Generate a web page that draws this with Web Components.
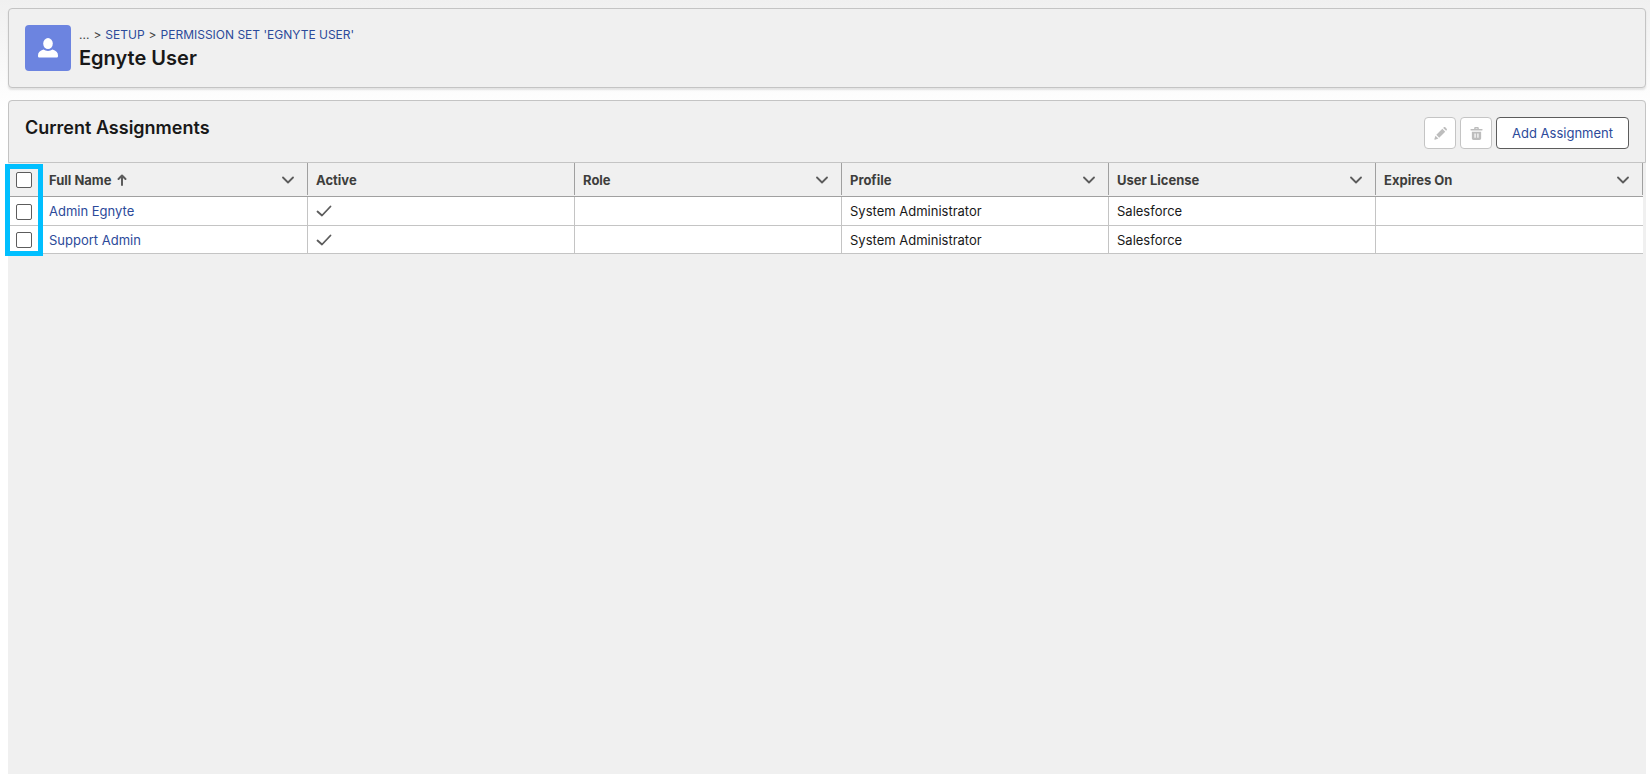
<!DOCTYPE html>
<html lang="en">
<head>
  <meta charset="UTF-8">
  <meta name="viewport" content="width=device-width, initial-scale=1.0">
  <title>Egnyte User</title>
  <style>
    html {
      height: 100%;
      background: #ffffff;
    }

    body {
      min-height: 100%;
      box-sizing: border-box;
      margin: 0;
      padding: 8px 4px 0 8px;
      display: flex;
      flex-direction: column;
      gap: 12px;
      background: linear-gradient(#f0f0f0, #ffffff 110px);
      font-family: Inter, "Liberation Sans", sans-serif;
      font-size: 13px;
      line-height: 20px;
      color: #181818;
    }
  </style>
</head>
<body>
  <page-header heading="Egnyte User">
    <span>...</span>
    <span>&gt;</span>
    <a href="#setup">SETUP</a>
    <span>&gt;</span>
    <a href="#permission-set">PERMISSION SET 'EGNYTE USER'</a>
  </page-header>

  <list-panel heading="Current Assignments">
    <tool-button slot="actions" icon="edit" label="Edit" disabled></tool-button>
    <tool-button slot="actions" icon="delete" label="Delete" disabled></tool-button>
    <tool-button slot="actions">Add Assignment</tool-button>
    <assignment-table></assignment-table>
  </list-panel>

  <script>
    const ICONS = {
      user: { box: "0 0 20 20", path: '<ellipse cx="10" cy="5.6" rx="4.8" ry="5.5"/><path d="M5.500 11.600c1.200.8 2.800 1.300 4.500 1.300s3.300-.5 4.500-1.300C18 12.500 20 14.500 20 17.500v.5c0 1-.6 1.500-1.500 1.500h-17C.6 19.500 0 19 0 18v-.5c0-3 2-5 5.500-5.900z"/>' },
      edit: { box: "0 0 14 14", path: '<path d="M1.600 9.300l3.100 3.100-3.600 1.200c-.5.1-.8-.2-.7-.7zM2.500 8.400l6.500-6.500 3.100 3.100-6.500 6.500zM9.900 1l.6-.6c.5-.5 1.200-.5 1.700 0l1.400 1.400c.5.5.5 1.200 0 1.700L13 4.100z"/>' },
      delete: { box: "0 0 14 14", path: '<path fill-rule="evenodd" d="M13 2.200H9.500V1.400C9.500.6 8.900 0 8.100 0H5.900c-.8 0-1.400.6-1.400 1.400v.8H1c-.3 0-.5.2-.5.5v.6c0 .3.2.5.5.5h12c.3 0 .5-.2.5-.5v-.6c0-.3-.2-.5-.5-.5zM6 2.200v-.6h2v.6zM2 5.200h10v7c0 1-.8 1.800-1.800 1.800H3.800C2.800 14 2 13.200 2 12.200zM4.800 7v4.600h1.300V7zM7.900 7v4.600h1.300V7z"/>' },
      down: { box: "0 0 12 12", path: '<path d="M1 3.500l5 5 5-5" fill="none" stroke="currentColor" stroke-width="1.8" stroke-linecap="round" stroke-linejoin="round"/>' },
      up: { box: "0 0 10 12", path: '<path d="M5 11V1.500M1.500 5L5 1.500 8.500 5" fill="none" stroke="currentColor" stroke-width="2" stroke-linecap="round" stroke-linejoin="round"/>' },
      check: { box: "0 0 16 12", path: '<path d="M1.500 6.500l4.500 4L14.500 1.500" fill="none" stroke="currentColor" stroke-width="1.8" stroke-linecap="round" stroke-linejoin="round"/>' },
    };

    function icon(name, width, height = width) {
      return `<svg viewBox="${ICONS[name].box}" width="${width}" height="${height}" fill="currentColor" aria-hidden="true">${ICONS[name].path}</svg>`;
    }

    class PageHeader extends HTMLElement {
      constructor() {
        super();
        this.attachShadow({ mode: "open" });
      }

      connectedCallback() {
        this.shadowRoot.innerHTML = `
          <style>
            :host {
              display: block;
            }

            header {
              display: flex;
              align-items: flex-start;
              gap: 8px;
              padding: 16px;
              border: 1px solid #c4c4c4;
              border-radius: 4px;
              background: #f0f0f0;
              box-shadow: 0 2px 2px 0 rgba(0, 0, 0, 0.1);
            }

            .badge {
              flex: none;
              display: flex;
              align-items: center;
              justify-content: center;
              width: 46px;
              height: 46px;
              border-radius: 4px;
              background: #6c84e0;
              color: #ffffff;
            }

            nav {
              display: flex;
              gap: 4px;
              font-size: 12px;
              line-height: 20px;
              color: #444444;
            }

            h1 {
              margin: 0;
              font-size: 20px;
              line-height: 26px;
              font-weight: 600;
            }

            ::slotted(a) {
              color: #2c4a9a;
              text-decoration: none;
            }
          </style>
          <header>
            <div class="badge">${icon("user", 20)}</div>
            <div>
              <nav aria-label="Breadcrumb"><slot></slot></nav>
              <h1>${this.getAttribute("heading")}</h1>
            </div>
          </header>
        `;
      }
    }

    class ListPanel extends HTMLElement {
      constructor() {
        super();
        this.attachShadow({ mode: "open" });
      }

      connectedCallback() {
        this.shadowRoot.innerHTML = `
          <style>
            :host {
              display: block;
              flex-grow: 1;
              border-radius: 4px 4px 0 0;
              background: #f0f0f0;
            }

            header {
              display: flex;
              align-items: flex-start;
              justify-content: space-between;
              padding: 16px 16px 13px;
              border: 1px solid #c4c4c4;
              border-radius: 4px 4px 0 0;
            }

            h2 {
              margin: 0;
              font-size: 18px;
              line-height: 22px;
              font-weight: 600;
            }

            .actions {
              display: flex;
              align-items: center;
              gap: 4px;
            }
          </style>
          <header>
            <h2>${this.getAttribute("heading")}</h2>
            <div class="actions"><slot name="actions"></slot></div>
          </header>
          <slot></slot>
        `;
      }
    }

    class ToolButton extends HTMLElement {
      constructor() {
        super();
        this.attachShadow({ mode: "open" });
      }

      connectedCallback() {
        const name = this.getAttribute("icon");
        const label = this.getAttribute("label");
        this.shadowRoot.innerHTML = `
          <style>
            :host {
              display: block;
            }

            button {
              display: flex;
              align-items: center;
              justify-content: center;
              min-width: 32px;
              height: 32px;
              padding: 0 15px;
              border: 1px solid #5c5c5c;
              border-radius: 4px;
              background: #ffffff;
              color: #2c4a9a;
              font: inherit;
              cursor: pointer;
            }

            button.icon {
              padding: 0;
              border-color: #c4c4c4;
              color: #bdbdbd;
              cursor: default;
            }
          </style>
          <button type="button" class="${name ? "icon" : ""}"
            ${label ? `aria-label="${label}"` : ""}
            ${this.hasAttribute("disabled") ? "disabled" : ""}>
            ${name ? icon(name, 13) : "<slot></slot>"}
          </button>
        `;
      }
    }

    class AssignmentTable extends HTMLElement {
      constructor() {
        super();
        this.attachShadow({ mode: "open" });
        this.columns = [
          { label: "Full Name", menu: true, sorted: true },
          { label: "Active" },
          { label: "Role", menu: true },
          { label: "Profile", menu: true },
          { label: "User License", menu: true },
          { label: "Expires On", menu: true },
        ];
        this.rows = [
          { name: "Admin Egnyte", profile: "System Administrator", license: "Salesforce" },
          { name: "Support Admin", profile: "System Administrator", license: "Salesforce" },
        ];
      }

      connectedCallback() {
        this.render();
      }

      renderColumn(column) {
        return `
          <th scope="col" ${column.sorted ? 'aria-sort="ascending"' : ""}>
            <div class="head">
              <span>${column.label}</span>
              ${column.sorted ? icon("up", 10, 12) : ""}
              ${column.menu ? `<button type="button" aria-label="${column.label} actions">${icon("down", 12)}</button>` : ""}
            </div>
          </th>
        `;
      }

      renderRow(row) {
        return `
          <tr>
            <td class="select"><input type="checkbox" aria-label="Select ${row.name}"></td>
            <td><a href="#user">${row.name}</a></td>
            <td><span class="check" role="img" aria-label="Active">${icon("check", 16, 12)}</span></td>
            <td></td>
            <td>${row.profile}</td>
            <td>${row.license}</td>
            <td></td>
          </tr>
        `;
      }

      render() {
        this.shadowRoot.innerHTML = `
          <style>
            :host {
              display: block;
              position: relative;
              margin-right: 3px;
            }

            table {
              width: 100%;
              table-layout: fixed;
              border-collapse: separate;
              border-spacing: 0;
            }

            col.select {
              width: 33px;
            }

            th, td {
              box-sizing: border-box;
              padding: 0;
              text-align: left;
              vertical-align: middle;
            }

            th {
              padding-bottom: 1px;
              border-bottom: 1px solid #a0a0a0;
              font-weight: 700;
              color: #3e3e3c;
            }

            td {
              height: 28px;
              padding-left: 8px;
              border-right: 1px solid #c4c4c4;
              border-bottom: 1px solid #c4c4c4;
              background: #ffffff;
            }

            tr:first-child td {
              height: 29px;
            }

            td:last-child {
              border-right: 0;
            }

            th.select, td.select {
              padding: 1px 0 0 8px;
              border-right: 0;
            }

            .head {
              box-sizing: border-box;
              display: flex;
              align-items: center;
              gap: 6px;
              height: 32px;
              padding: 2px 13px 0 8px;
              border-right: 1px solid #a0a0a0;
            }

            .head button {
              display: flex;
              margin-left: auto;
              padding: 0;
              border: 0;
              background: none;
              color: #5c5c5c;
            }

            .head svg {
              color: #5c5c5c;
            }

            .check {
              display: flex;
              color: #5c5c5c;
            }

            input {
              appearance: none;
              display: block;
              box-sizing: border-box;
              width: 16px;
              height: 16px;
              margin: 0;
              border: 1px solid #5c5c5c;
              border-radius: 2px;
              background: #ffffff;
            }

            a {
              color: #2c4a9a;
              text-decoration: none;
            }

            /* frame drawn over the selection column */
            .highlight {
              position: absolute;
              top: 1px;
              bottom: -2px;
              left: -3px;
              width: 38px;
              box-sizing: border-box;
              border: 5px solid #00bfff;
              pointer-events: none;
            }
          </style>
          <table>
            <colgroup>
              <col class="select">
              <col span="6">
            </colgroup>
            <thead>
              <tr>
                <th class="select"><input type="checkbox" aria-label="Select all"></th>
                ${this.columns.map((column) => this.renderColumn(column)).join("")}
              </tr>
            </thead>
            <tbody>
              ${this.rows.map((row) => this.renderRow(row)).join("")}
            </tbody>
          </table>
          <div class="highlight"></div>
        `;
      }
    }

    customElements.define("page-header", PageHeader);
    customElements.define("list-panel", ListPanel);
    customElements.define("tool-button", ToolButton);
    customElements.define("assignment-table", AssignmentTable);
  </script>
</body>
</html>
